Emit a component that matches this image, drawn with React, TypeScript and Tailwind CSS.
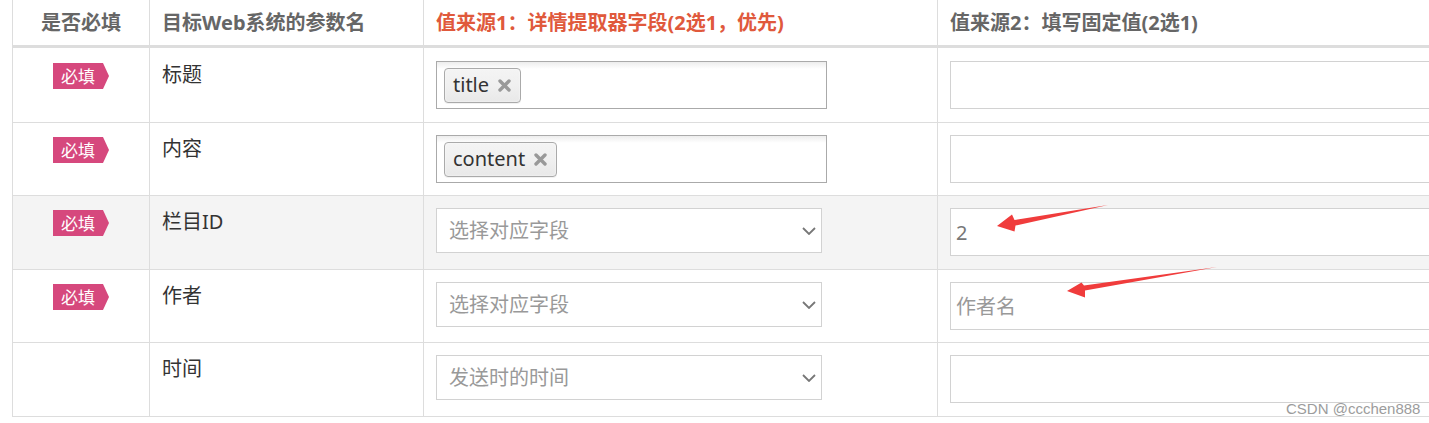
import { Fragment } from 'react';

interface Row {
  required: boolean;
  name: string;
  tag?: string;
  field?: string;
  value?: string;
  placeholder?: string;
  height: string;
  pad: string;
  bg: string;
}

const rows: Row[] = [
  { required: true, name: '标题', tag: 'title', height: 'h-[75px]', pad: 'pt-[13px]', bg: 'bg-white' },
  { required: true, name: '内容', tag: 'content', height: 'h-[73px]', pad: 'pt-3', bg: 'bg-white' },
  { required: true, name: '栏目ID', field: '选择对应字段', value: '2', height: 'h-[74px]', pad: 'pt-3', bg: 'bg-[#f4f4f4]' },
  { required: true, name: '作者', field: '选择对应字段', placeholder: '作者名', height: 'h-[73px]', pad: 'pt-3', bg: 'bg-white' },
  { required: false, name: '时间', field: '发送时的时间', height: 'h-[74px]', pad: 'pt-3', bg: 'bg-white' },
];

const cell = 'box-border border-r border-b border-[#ddd]';

const App = () => {
  return (
    <div className="relative h-[423px] w-[1429px] overflow-hidden bg-white font-['Noto_Sans','Noto_Sans_CJK_SC',sans-serif]">
      <div className="ml-3 grid w-max grid-cols-[138px_274px_514px_560px]">
        <div className={`${cell} flex h-[48px] items-center justify-center border-b-[3px] border-l text-[20px] font-bold text-[#666]`}>是否必填</div>
        <div className={`${cell} flex h-[48px] items-center border-b-[3px] px-3 text-[20px] font-bold text-[#666]`}>目标Web系统的参数名</div>
        <div className={`${cell} flex h-[48px] items-center border-b-[3px] px-3 text-[20px] font-bold text-[#e0593c]`}>值来源1：详情提取器字段(2选1，优先)</div>
        <div className={`${cell} flex h-[48px] items-center border-b-[3px] px-3 text-[20px] font-bold text-[#666]`}>值来源2：填写固定值(2选1)</div>

        {rows.map((row) => (
          <Fragment key={row.name}>
            <div className={`${cell} ${row.height} ${row.pad} ${row.bg} flex justify-center border-l`}>
              {row.required && <Badge />}
            </div>
            <div className={`${cell} ${row.height} ${row.pad} ${row.bg} px-3 text-[20px] leading-[28px] text-[#333]`}>{row.name}</div>
            <div className={`${cell} ${row.height} ${row.pad} ${row.bg} px-3`}>
              {row.tag ? <TagInput tag={row.tag} /> : <SelectBox label={row.field ?? ''} />}
            </div>
            <div className={`${cell} ${row.height} ${row.pad} ${row.bg} px-3`}>
              <input
                readOnly
                defaultValue={row.value}
                placeholder={row.placeholder}
                className="box-border h-[48px] w-full border border-[#d2d2d2] bg-white px-[5px] text-[20px] text-[#777] outline-none placeholder:text-[#999]"
              />
            </div>
          </Fragment>
        ))}
      </div>

      <svg className="pointer-events-none absolute left-0 top-0" width="1429" height="423" viewBox="0 0 1429 423">
        <polygon points="997,226 1012,214.5 1014.5,220 1108,205 1015.5,225.5 1014.5,231.5" fill="#f03c3c" />
        <polygon points="1067,291 1081.5,282.5 1084,285.5 1217,267 1085,290.5 1085,297.5" fill="#f03c3c" />
      </svg>

      <span className="absolute left-[1286px] top-[401px] font-['Liberation_Sans',sans-serif] text-[15px] leading-none text-[#9c9c9c]">
        CSDN @ccchen888
      </span>
    </div>
  );
};

const Badge = () => (
  <span className="mt-[2px] flex h-[26px] w-[56px] items-center justify-center bg-[#d6487d] pr-[6px] text-[17px] leading-none text-white [clip-path:polygon(0_0,calc(100%_-_6px)_0,100%_50%,calc(100%_-_6px)_100%,0_100%)]">
    必填
  </span>
);

const TagInput = ({ tag }: { tag: string }) => (
  <div className="box-border flex h-[48px] w-[391px] items-center border border-[#aaa] bg-linear-to-b from-[#eee] from-[1%] to-white to-[15%] pl-[7px]">
    <span className="box-border flex h-[35px] items-center gap-[9px] rounded-[4px] border border-[#aaa] bg-linear-to-b from-[#f4f4f4] via-[#f0f0f0] to-[#e8e8e8] pl-[8px] pr-[9px] text-[20px] text-[#333] shadow-[inset_0_0_2px_#fff,0_1px_0_rgba(0,0,0,0.05)]">
      {tag}
      <svg width="13" height="13" viewBox="0 0 13 13">
        <path d="M2 2 L11 11 M11 2 L2 11" stroke="#999" strokeWidth="3.4" strokeLinecap="round" />
      </svg>
    </span>
  </div>
);

const SelectBox = ({ label }: { label: string }) => (
  <div className="box-border flex h-[45px] w-[386px] items-center justify-between border border-[#d2d2d2] bg-white pl-3 pr-[5px] text-[20px] text-[#999]">
    <span>{label}</span>
    <svg width="14" height="8" viewBox="0 0 14 8">
      <polyline points="1,1 7,7 13,1" fill="none" stroke="#777" strokeWidth="1.8" />
    </svg>
  </div>
);

export default App;
